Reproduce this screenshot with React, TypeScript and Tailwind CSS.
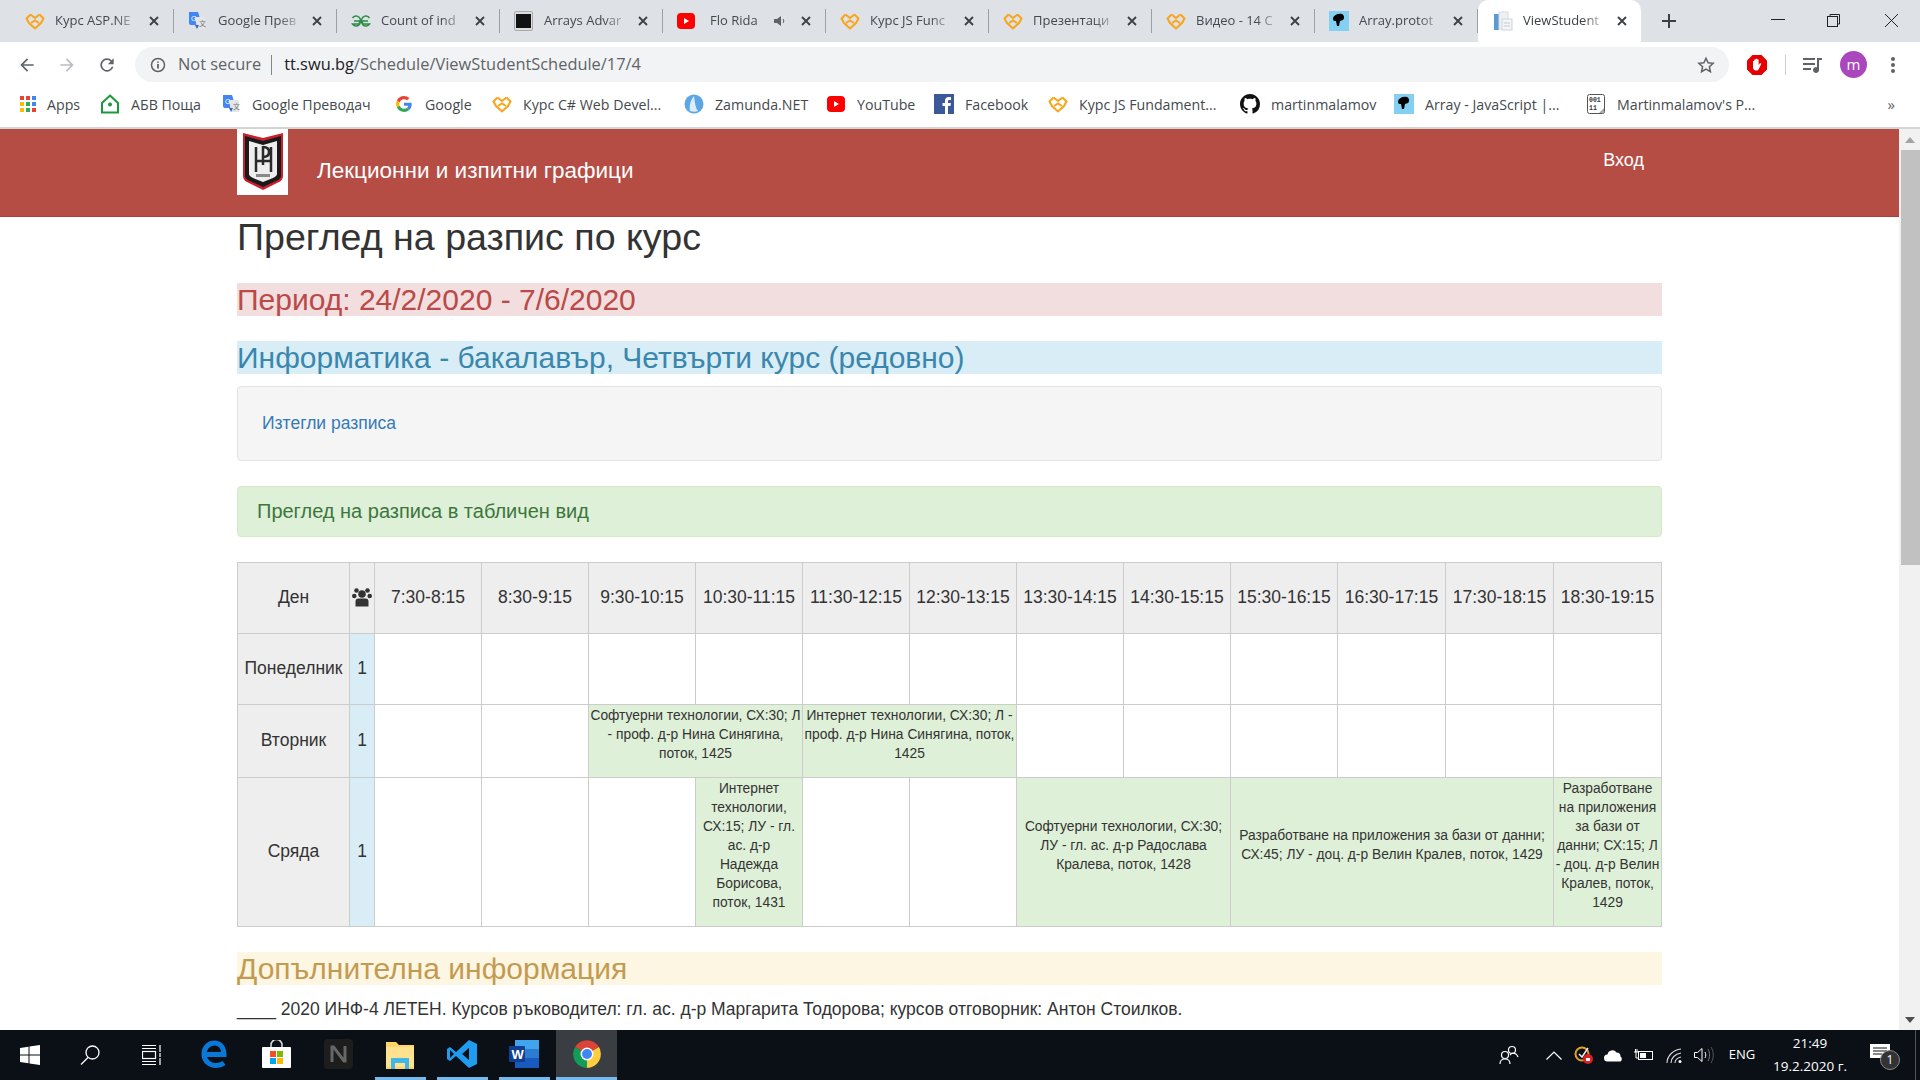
import React from 'react';

const SoftUni = () => (
  <svg width="20" height="17" viewBox="0 0 20 17" fill="none" stroke="#f9a51a" strokeWidth="2" className="shrink-0">
    <path d="M5.500 1.500 L1.500 5.500 L4 10 L10 15.500 L16 10 L18.500 5.500 L14.500 1.500" />
    <path d="M5.500 1.500 L10 5 L14.500 1.500" />
    <path d="M6 10 L10 7.500 L14 10" />
  </svg>
);
const GTranslate = () => (
  <svg width="18" height="20" viewBox="0 0 18 20" className="shrink-0">
    <path d="M1 1h9l4 13H3a2 2 0 0 1-2-2z" fill="#4285f4" />
    <path d="M7 6h10v11a1 1 0 0 1-1 1H9z" fill="#e3e5e8" />
    <path d="M7 14h4l-2 4z" fill="#3367c8" />
    <text x="3" y="10" fontSize="7" fill="#fff" fontFamily="Liberation Sans">G</text>
    <text x="11" y="15" fontSize="7" fill="#777" fontFamily="Noto Sans CJK SC">文</text>
  </svg>
);
const Gfg = () => (
  <svg width="20" height="14" viewBox="0 0 20 14" fill="none" stroke="#2f8d46" strokeWidth="1.500" className="shrink-0">
    <path d="M1.500 4a4.500 5 0 1 1 0 6h7V7H3" />
    <path d="M18.500 4a4.500 5 0 1 0 0 6h-7V7H17" />
  </svg>
);
const Terminal = () => (
  <svg width="19" height="20" viewBox="0 0 19 20" className="shrink-0">
    <rect x="0.500" y="0.500" width="18" height="19" rx="1.500" fill="#ddd" stroke="#aaa" />
    <rect x="2" y="3" width="15" height="14" fill="#111" />
  </svg>
);
const Yt = () => (
  <svg width="18" height="18" viewBox="0 0 18 18" className="shrink-0">
    <rect y="1" width="18" height="16" rx="4" fill="#f00" />
    <path d="M7 6l5 3-5 3z" fill="#fff" />
  </svg>
);
const Mdn = () => (
  <svg width="20" height="20" viewBox="0 0 20 20" className="shrink-0">
    <rect width="20" height="20" fill="#83d0f2" />
    <path d="M4 7c1-3 5-5 9-4 2 1 3 4 1 6l-3 1-1 5-2 0-1-5c-2 0-3 0-3-3z" fill="#000" />
  </svg>
);
const DocIcon = () => (
  <svg width="20" height="20" viewBox="0 0 20 20" className="shrink-0">
    <rect x="1" y="3" width="5" height="16" fill="#5b9bd5" />
    <rect x="6" y="1" width="9" height="17" fill="#eef1f4" stroke="#d5dae0" />
    <rect x="9" y="8" width="10" height="11" fill="#f2f4f6" stroke="#cfd5db" />
    <path d="M11 12h6M11 15h6" stroke="#c4ccd4" />
  </svg>
);
const Apps = () => (
  <svg width="16" height="16" viewBox="0 0 16 16" className="shrink-0">
    {['#ea4335', '#ea4335', '#4285f4', '#fbbc05', '#34a853', '#4285f4', '#fbbc05', '#34a853', '#ea4335'].map((c, i) => (
      <rect key={i} x={(i % 3) * 6} y={Math.floor(i / 3) * 6} width="4" height="4" fill={c} />
    ))}
  </svg>
);
const Abv = () => (
  <svg width="20" height="20" viewBox="0 0 20 20" fill="none" className="shrink-0">
    <path d="M10 1.500 L18 9 V18.500 H2 V9 Z" stroke="#1a9a3a" strokeWidth="2" fill="#fff" />
    <circle cx="10" cy="10.500" r="2" fill="#1a9a3a" />
  </svg>
);
const GoogleG = () => (
  <svg width="16" height="16" viewBox="0 0 48 48" className="shrink-0">
    <path fill="#EA4335" d="M24 9.500c3.500 0 6.700 1.200 9.200 3.600l6.900-6.900C35.900 2.400 30.500 0 24 0 14.600 0 6.500 5.400 2.600 13.200l8 6.200C12.500 13.700 17.800 9.500 24 9.500z" />
    <path fill="#4285F4" d="M47 24.500c0-1.600-.1-3.100-.4-4.500H24v9h12.900c-.6 3-2.200 5.500-4.700 7.200l7.700 6C44.400 38.100 47 31.900 47 24.500z" />
    <path fill="#FBBC05" d="M10.600 28.600a14.500 14.500 0 0 1 0-9.200l-8-6.200a24 24 0 0 0 0 21.600z" />
    <path fill="#34A853" d="M24 48c6.500 0 11.900-2.100 15.900-5.800l-7.700-6c-2.200 1.400-4.900 2.300-8.200 2.300-6.200 0-11.500-4.200-13.400-9.900l-8 6.200C6.500 42.600 14.600 48 24 48z" />
  </svg>
);
const Globe = () => (
  <svg width="20" height="20" viewBox="0 0 20 20" className="shrink-0">
    <circle cx="10" cy="10" r="9.500" fill="#5aa6e6" />
    <path d="M10 2c-3 4-5 8-4 15 3 1 6 1 8 0-3-4-3-9-4-15z" fill="#dcecfa" />
  </svg>
);
const Fb = () => (
  <svg width="20" height="20" viewBox="0 0 20 20" className="shrink-0">
    <rect width="20" height="20" fill="#3b5998" />
    <path d="M14 20v-8h2.500l.4-3H14V7.500c0-1 .3-1.500 1.500-1.500H17V3.200C16.500 3.100 15.600 3 14.700 3 12.500 3 11 4.300 11 6.800V9H8.500v3H11v8z" fill="#fff" />
  </svg>
);
const Github = () => (
  <svg width="20" height="20" viewBox="0 0 16 16" fill="#111" className="shrink-0">
    <path d="M8 0C3.580 0 0 3.580 0 8c0 3.540 2.290 6.530 5.470 7.590.4.070.55-.17.55-.38 0-.19-.01-.82-.01-1.490-2.010.37-2.530-.49-2.690-.94-.09-.23-.48-.94-.82-1.130-.28-.15-.68-.52-.01-.53.63-.01 1.080.58 1.230.82.720 1.210 1.870.87 2.330.66.070-.52.280-.87.510-1.070-1.780-.2-3.640-.89-3.640-3.950 0-.87.310-1.590.820-2.150-.08-.2-.36-1.020.08-2.120 0 0 .67-.21 2.200.82.640-.18 1.320-.27 2-.27s1.360.09 2 .27c1.530-1.040 2.200-.82 2.200-.82.440 1.100.160 1.920.080 2.120.51.560.82 1.270.82 2.150 0 3.070-1.870 3.750-3.650 3.950.29.250.54.730.54 1.480 0 1.070-.01 1.930-.01 2.200 0 .21.150.46.550.38A8.010 8.010 0 0 0 16 8c0-4.420-3.580-8-8-8z" />
  </svg>
);
const Binary = () => (
  <svg width="18" height="20" viewBox="0 0 18 20" className="shrink-0">
    <rect x="0.500" y="0.500" width="17" height="19" rx="2" fill="#fff" stroke="#555" />
    <text x="2" y="8" fontSize="6.500" fontFamily="Liberation Mono" fontWeight="700" fill="#333">001</text>
    <text x="2" y="16" fontSize="6.500" fontFamily="Liberation Mono" fontWeight="700" fill="#333">11</text>
    <path d="M12 19l5-5v5z" fill="#aaa" />
  </svg>
);

const tabs = [
  { icon: <SoftUni />, t: 'Курс ASP.NE' },
  { icon: <GTranslate />, t: 'Google Прев' },
  { icon: <Gfg />, t: 'Count of ind' },
  { icon: <Terminal />, t: 'Arrays Advar' },
  { icon: <Yt />, t: 'Flo Rida', audio: true },
  { icon: <SoftUni />, t: 'Курс JS Func' },
  { icon: <SoftUni />, t: 'Презентаци' },
  { icon: <SoftUni />, t: 'Видео - 14 С' },
  { icon: <Mdn />, t: 'Array.protot' },
];

const X = () => (
  <svg width="10" height="10" viewBox="0 0 10 10" stroke="#3c4043" strokeWidth="1.800" className="shrink-0">
    <path d="M1 1l8 8M9 1l-8 8" />
  </svg>
);

const bookmarks = [
  { icon: <Apps />, t: 'Apps', w: 'w-[80px]' },
  { icon: <Abv />, t: 'АБВ Поща', w: 'w-[121px]' },
  { icon: <GTranslate />, t: 'Google Преводач', w: 'w-[173px]' },
  { icon: <GoogleG />, t: 'Google', w: 'w-[98px]' },
  { icon: <SoftUni />, t: 'Курс C# Web Devel...', w: 'w-[192px]' },
  { icon: <Globe />, t: 'Zamunda.NET', w: 'w-[142px]' },
  { icon: <Yt />, t: 'YouTube', w: 'w-[108px]' },
  { icon: <Fb />, t: 'Facebook', w: 'w-[114px]' },
  { icon: <SoftUni />, t: 'Курс JS Fundament...', w: 'w-[192px]' },
  { icon: <Github />, t: 'martinmalamov', w: 'w-[154px]' },
  { icon: <Mdn />, t: 'Array - JavaScript |...', w: 'w-[192px]' },
  { icon: <Binary />, t: "Martinmalamov's P...", w: 'w-[200px]' },
];

const times = ['7:30-8:15', '8:30-9:15', '9:30-10:15', '10:30-11:15', '11:30-12:15', '12:30-13:15', '13:30-14:15', '14:30-15:15', '15:30-16:15', '16:30-17:15', '17:30-18:15', '18:30-19:15'];
const colW = ['w-[107px]', 'w-[107px]', 'w-[107px]', 'w-[107px]', 'w-[107px]', 'w-[107px]', 'w-[107px]', 'w-[107px]', 'w-[107px]', 'w-[108px]', 'w-[108px]', 'w-[108px]'];

const bd = 'border border-[#cccccc]';
const Day = ({ d }: { d: string }) => (
  <>
    <td className={`${bd} bg-[#eeeeee] text-center text-[17.500px] text-[#333] pb-[2px]`}>{d}</td>
    <td className={`${bd} bg-[#d9edf7] text-center text-[17.500px] text-[#333] pb-[2px]`}>1</td>
  </>
);
const Empty = () => <td className={bd} />;
const Lesson = ({ span, children }: { span?: number; children: React.ReactNode }) => (
  <td colSpan={span} className={`${bd} bg-[#dff0d8] text-center align-middle text-[13.800px] leading-[19px] text-[#333] px-px pb-[14px]`}>
    {children}
  </td>
);

const Logo = () => (
  <div className="w-[51px] h-[66px] bg-white flex items-center justify-center shrink-0">
    <svg width="44" height="60" viewBox="0 0 44 60">
      <path d="M2 1 L22 6 L42 1 V44 Q42 49 36 51 L22 58 L8 51 Q2 49 2 44 Z" fill="#c8202c" />
      <path d="M4 4 L22 9 L40 4 V44 Q40 47 35 49 L22 55 L9 49 Q4 47 4 44 Z" fill="#1a1a1a" />
      <path d="M8 9 L22 13 L36 9 V42 Q36 44 32 46 L22 50 L12 46 Q8 44 8 42 Z" fill="#eeeeee" />
      <path d="M15 15V40M30 15V40M15 29H30M22 14V33M22 15Q28 15 28 20Q28 25 22 25" stroke="#2a2a2a" strokeWidth="2.500" fill="none" />
      <rect x="15" y="42" width="14" height="3" fill="#888" />
    </svg>
  </div>
);

export default function App() {
  return (
    <div className="w-[1920px] h-[1080px] overflow-hidden flex flex-col bg-white font-['Liberation_Sans',sans-serif]">
      {/* tab strip */}
      <div className="h-[42px] bg-[#dee1e6] flex shrink-0 pl-[11px] font-['Open_Sans',sans-serif] text-[13px] text-[#45494e]">
        {tabs.map((tab, i) => (
          <div key={i} className="w-[163px] flex items-center border-r border-[#9aa0a6] my-[9px] pl-[14px] pr-[14px] shrink-0">
            <div className={tab.audio ? 'w-[33px] shrink-0 flex' : 'w-[30px] shrink-0 flex'}>{tab.icon}</div>
            <span className="flex-1 min-w-0 whitespace-nowrap [mask-image:linear-gradient(to_right,black_70%,transparent)]">{tab.t}</span>
            {tab.audio && (
              <svg width="13" height="12" viewBox="0 0 13 12" className="shrink-0 mr-[14px]" fill="#5f6368">
                <path d="M0 4h3l4-3v10L3 8H0z" />
                <path d="M9 4c1 1 1 3 0 4" stroke="#5f6368" fill="none" />
              </svg>
            )}
            {!tab.audio && <span className="w-[8px] shrink-0" />}
            <X />
          </div>
        ))}
        <div className="w-[163px] h-[42px] bg-white rounded-t-[10px] flex items-center pl-[15px] pr-[14px] shrink-0 text-[#3c4043]">
          <div className="w-[30px] shrink-0 flex"><DocIcon /></div>
          <span className="flex-1 min-w-0 whitespace-nowrap [mask-image:linear-gradient(to_right,black_70%,transparent)]">ViewStudent</span>
          <span className="w-[8px] shrink-0" />
          <X />
        </div>
        <div className="w-[56px] flex items-center justify-center shrink-0">
          <svg width="16" height="16" viewBox="0 0 16 16" stroke="#3c4043" strokeWidth="2"><path d="M8 1v14M1 8h14" /></svg>
        </div>
        <div className="flex-1" />
        <div className="flex shrink-0 -mt-[2px]">
          <div className="w-[54px] flex items-center justify-center">
            <svg width="14" height="2" className="block"><rect width="14" height="1" fill="#222" /></svg>
          </div>
          <div className="w-[57px] flex items-center justify-center">
            <svg width="13" height="13" viewBox="0 0 13 13" fill="none" stroke="#222"><rect x="0.500" y="2.500" width="10" height="10" /><path d="M3 2.500V0.500H12.500V10H10.500" /></svg>
          </div>
          <div className="w-[58px] flex items-center justify-center">
            <svg width="13" height="13" viewBox="0 0 13 13" stroke="#222"><path d="M0 0l13 13M13 0L0 13" /></svg>
          </div>
        </div>
      </div>

      {/* toolbar */}
      <div className="h-[40px] bg-white flex shrink-0 pt-[5px]">
        <div className="w-[135px] h-[35px] flex items-center pl-[17px] gap-[20px] shrink-0">
          <svg width="20" height="20" viewBox="0 0 24 24" fill="#5f6368"><path d="M20 11H7.800l5.600-5.600L12 4l-8 8 8 8 1.400-1.400L7.800 13H20z" /></svg>
          <svg width="20" height="20" viewBox="0 0 24 24" fill="#b9bcc1"><path d="M4 11h12.200l-5.600-5.600L12 4l8 8-8 8-1.400-1.400 5.600-5.600H4z" /></svg>
          <svg width="20" height="20" viewBox="0 0 24 24" fill="#5f6368"><path d="M17.650 6.350A8 8 0 1 0 19.730 14h-2.080a6 6 0 1 1-1.410-6.240L13 11h7V4z" /></svg>
        </div>
        <div className="w-[1594px] h-[35px] bg-[#f1f3f4] rounded-full flex items-center pl-[15px] shrink-0 font-['Open_Sans',sans-serif] text-[16.400px]">
          <svg width="16" height="16" viewBox="0 0 16 16" fill="none" className="shrink-0"><circle cx="8" cy="8" r="6.500" stroke="#5f6368" strokeWidth="1.500" /><path d="M8 7v4.500M8 4.500v1.300" stroke="#5f6368" strokeWidth="1.800" /></svg>
          <span className="ml-[12px] text-[#5f6368]">Not secure</span>
          <span className="w-px h-[20px] bg-[#80868b] ml-[10px] mr-[12px]" />
          <span className="text-[#202124]">tt.swu.bg</span>
          <span className="text-[#5f6368]">/Schedule/ViewStudentSchedule/17/4</span>
          <svg width="18" height="18" viewBox="0 0 24 24" fill="none" stroke="#5f6368" strokeWidth="2" className="ml-auto mr-[14px]"><path d="M12 3l2.800 6.100 6.700.7-5 4.500 1.400 6.600L12 17.500 6.100 20.900l1.400-6.600-5-4.500 6.700-.7z" /></svg>
        </div>
        <div className="flex-1 h-[35px] flex items-center pl-[17px]">
          <svg width="22" height="22" viewBox="0 0 22 22" className="shrink-0">
            <path d="M6.500 1h9L21 6.500v9L15.500 21h-9L1 15.500v-9z" fill="#e60000" />
            <path d="M7 11V7h1.300v3.500V5.500h1.400V10V4.700h1.500V10V5.500h1.400V11l1.500-2 1.200.8-2.600 5.400c-.4.800-1.200 1.300-2.200 1.300H10c-1.700 0-3-1.300-3-3z" fill="#fff" />
          </svg>
          <span className="w-px h-[20px] bg-[#c9ccd0] ml-[17px] mr-[17px]" />
          <svg width="20" height="18" viewBox="0 0 20 18" fill="#5f6368" className="shrink-0"><path d="M0 2h12v2H0zM0 7h12v2H0zM0 12h8v2H0z" /><path d="M14 2h5v2h-3v10a3 3 0 1 1-2-2.800z" /></svg>
          <div className="w-[27px] h-[27px] rounded-full bg-[#ab47bc] text-white flex items-center justify-center text-[15px] ml-[17px] shrink-0 font-['Open_Sans',sans-serif]">m</div>
          <svg width="4" height="18" viewBox="0 0 4 18" fill="#5f6368" className="ml-[24px] shrink-0"><circle cx="2" cy="3" r="2" /><circle cx="2" cy="9" r="2" /><circle cx="2" cy="15" r="2" /></svg>
        </div>
      </div>

      {/* bookmarks */}
      <div className="h-[47px] bg-white border-b-2 border-[#d2d3d5] flex items-center shrink-0 pl-[20px] font-['Open_Sans',sans-serif] text-[14.200px] text-[#45494e] whitespace-nowrap">
        {bookmarks.map((b, i) => (
          <div key={i} className={`${b.w} flex items-center shrink-0`}>
            <div className={i === 0 ? 'w-[27px] flex shrink-0' : 'w-[20px] mr-[11px] flex justify-center shrink-0'}>{b.icon}</div>
            <span>{b.t}</span>
          </div>
        ))}
        <span className="ml-auto mr-[25px] text-[15px] text-[#5f6368]">»</span>
      </div>

      {/* page */}
      <div className="flex-1 min-h-0 flex">
        <div className="flex-1 min-w-0 overflow-hidden">
          <header className="h-[88px] bg-[#b64d45] border-b border-[#a8433b]">
            <div className="w-[1425px] mx-auto flex items-start text-white">
              <Logo />
              <div className="ml-[29px] mt-[27px] text-[22.500px] leading-[30px]">Лекционни и изпитни графици</div>
              <div className="ml-auto mr-[18px] mt-[20px] text-[18px] leading-[22px]">Вход</div>
            </div>
          </header>
          <main className="w-[1425px] mx-auto text-[#333]">
            <h1 className="h-[40px] text-[37.600px] leading-[40px] text-[#333]">Преглед на разпис по курс</h1>
            <h2 className="mt-[26px] h-[33px] bg-[#f2dede] text-[#b94a48] text-[30px] leading-[33px]">Период: 24/2/2020 - 7/6/2020</h2>
            <h2 className="mt-[25px] h-[33px] bg-[#d9edf7] text-[#3a87ad] text-[30px] leading-[33px]">Информатика - бакалавър, Четвърти курс (редовно)</h2>
            <div className="mt-[12px] h-[75px] bg-[#f5f5f5] border border-[#e3e3e3] rounded-[4px] pl-[24px] flex items-center text-[#337ab7] text-[17.500px]">Изтегли разписа</div>
            <div className="mt-[25px] h-[51px] bg-[#dff0d8] border border-[#d6e9c6] rounded-[4px] pl-[19px] pb-[2px] flex items-center text-[#3c763d] text-[20px]">Преглед на разписа в табличен вид</div>
            <table className="mt-[25px] w-[1425px] table-fixed border-collapse">
              <colgroup>
                <col className="w-[112px]" />
                <col className="w-[25px]" />
                {colW.map((c, i) => <col key={i} className={c} />)}
              </colgroup>
              <thead>
                <tr className="h-[71px] bg-[#eeeeee] text-[17.500px] text-[#333]">
                  <th className={`${bd} font-normal pb-[2px]`}>Ден</th>
                  <th className={`${bd} font-normal pb-[2px]`}>
                    <svg width="20" height="19" viewBox="0 0 20 19" fill="#333" className="mx-auto block">
                      <circle cx="10" cy="6" r="3.800" /><circle cx="4.500" cy="2.500" r="2.300" /><circle cx="15.500" cy="2.500" r="2.300" />
                      <circle cx="2.300" cy="8" r="2.300" /><circle cx="17.700" cy="8" r="2.300" />
                      <path d="M3.500 18.500v-5a3 3 0 0 1 3-3h7a3 3 0 0 1 3 3v5z" />
                    </svg>
                  </th>
                  {times.map((t) => <th key={t} className={`${bd} font-normal whitespace-nowrap pb-[2px]`}>{t}</th>)}
                </tr>
              </thead>
              <tbody>
                <tr className="h-[71px]">
                  <Day d="Понеделник" />
                  {times.map((t) => <Empty key={t} />)}
                </tr>
                <tr className="h-[73px]">
                  <Day d="Вторник" />
                  <Empty /><Empty />
                  <Lesson span={2}>Софтуерни технологии, СХ:30; Л - проф. д-р Нина Синягина, поток, 1425</Lesson>
                  <Lesson span={2}>Интернет технологии, СХ:30; Л - проф. д-р Нина Синягина, поток, 1425</Lesson>
                  <Empty /><Empty /><Empty /><Empty /><Empty /><Empty />
                </tr>
                <tr className="h-[149px]">
                  <Day d="Сряда" />
                  <Empty /><Empty /><Empty />
                  <Lesson>Интернет технологии, СХ:15; ЛУ - гл. ас. д-р<br />Надежда Борисова, поток, 1431</Lesson>
                  <Empty /><Empty />
                  <Lesson span={2}>Софтуерни технологии, СХ:30; ЛУ - гл. ас. д-р Радослава Кралева, поток, 1428</Lesson>
                  <Lesson span={3}>Разработване на приложения за бази от данни; СХ:45; ЛУ - доц. д-р Велин Кралев, поток, 1429</Lesson>
                  <Lesson>Разработване на приложения за бази от данни; СХ:15; Л - доц. д-р Велин Кралев, поток, 1429</Lesson>
                </tr>
              </tbody>
            </table>
            <h2 className="mt-[25px] h-[33px] bg-[#fdf6e3] text-[#c49a50] text-[30px] leading-[33px]">Допълнителна информация</h2>
            <p className="mt-[14px] text-[17.500px] leading-[20px] text-[#333] whitespace-nowrap">____ 2020 ИНФ-4 ЛЕТЕН. Курсов ръководител: гл. ас. д-р Маргарита Тодорова; курсов отговорник: Антон Стоилков.</p>
          </main>
        </div>
        <div className="w-[21px] shrink-0 bg-[#f1f1f1] flex flex-col items-end">
          <div className="h-[21px] w-full flex items-center justify-center">
            <svg width="10" height="6" viewBox="0 0 10 6" fill="#a3a3a3"><path d="M5 0l5 6H0z" /></svg>
          </div>
          <div className="h-[415px] w-[19px] bg-[#c1c1c1]" />
          <div className="mt-auto h-[21px] w-full flex items-center justify-center">
            <svg width="10" height="6" viewBox="0 0 10 6" fill="#505050"><path d="M5 6l5-6H0z" /></svg>
          </div>
        </div>
      </div>

      {/* taskbar */}
      <div className="h-[50px] bg-[#0b1017] flex shrink-0 text-white font-['Open_Sans',sans-serif]">
        <div className="w-[60px] flex items-center justify-center">
          <svg width="20" height="20" viewBox="0 0 20 20" fill="#fff"><path d="M0 3l8.500-1.200V9.500H0zM9.500 1.600L20 0v9.500H9.500zM0 10.500h8.500v7.700L0 17zM9.500 10.500H20V20L9.500 18.400z" /></svg>
        </div>
        <div className="w-[60px] flex items-center justify-center">
          <svg width="20" height="20" viewBox="0 0 20 20" fill="none" stroke="#fff" strokeWidth="1.300"><circle cx="12.500" cy="7.500" r="6.500" /><path d="M8 12.500L1 19.500" /></svg>
        </div>
        <div className="w-[63px] flex items-center justify-center">
          <svg width="20" height="20" viewBox="0 0 20 20" fill="none" stroke="#fff" strokeWidth="1.200"><path d="M0 .5h14M0 19.500h14M0 3.500h14M0 16.500h14" /><rect x=".5" y="6.500" width="13" height="7" /><path d="M18 0v7M18 8v4M18 13v7" /></svg>
        </div>
        {[
          <svg key="e" width="26" height="28" viewBox="0 0 26 28" fill="none"><path d="M4 14.500H23C23 7 18.500 3 13.500 3 7 3 2.500 8.500 3 15 3.500 21.500 9 25.500 14.500 25.500 18 25.500 21 24.500 23 23" stroke="#0a78d6" strokeWidth="5" /></svg>,
          <svg key="s" width="29" height="28" viewBox="0 0 29 28"><path d="M9 8V5a5 5 0 0 1 11 0v3" fill="none" stroke="#ddd" strokeWidth="1.500" /><rect y="7" width="29" height="21" rx="1" fill="#fff" /><rect x="8" y="11" width="6" height="6" fill="#f25022" /><rect x="15" y="11" width="6" height="6" fill="#7fba00" /><rect x="8" y="18" width="6" height="6" fill="#00a4ef" /><rect x="15" y="18" width="6" height="6" fill="#ffb900" /></svg>,
          <svg key="n" width="29" height="30" viewBox="0 0 29 30"><rect width="29" height="30" rx="4" fill="#1d1d1d" /><path d="M8 23V8h1.500L20 22h1V7" fill="none" stroke="#666" strokeWidth="3" /></svg>,
          <svg key="f" width="28" height="30" viewBox="0 0 28 30"><path d="M0 3h10l3 3h15v24H0z" fill="#ffd766" /><rect y="8" width="28" height="20" fill="#fee28f" /><path d="M5 19h18v11h-4v-6H9v6H5z" fill="#3fb7e8" /></svg>,
          <svg key="v" width="30" height="30" viewBox="0 0 30 30"><path d="M22 1l8 4v20l-8 4L9 17l-6 5-3-2v-10l3-2 6 5z" fill="#1f9cf0" /><path d="M22 9l-7 6 7 6z" fill="#0b1017" /><path d="M3 11l4 4-4 4z" fill="#0b1017" /></svg>,
          <svg key="w" width="30" height="28" viewBox="0 0 30 28"><rect x="6" width="24" height="28" rx="2" fill="#2b7cd3" /><rect x="6" width="24" height="9" fill="#41a5ee" /><rect x="6" y="18" width="24" height="10" fill="#185abd" /><rect y="6" width="16" height="16" rx="1" fill="#103f91" /><text x="2.500" y="18.500" fontSize="13" fontWeight="700" fill="#fff" fontFamily="Liberation Sans">W</text></svg>,
        ].map((ic, i) => (
          <div key={i} className="w-[62px] flex flex-col items-center shrink-0">
            <div className="flex-1 flex items-center justify-center">{ic}</div>
            <div className={i >= 3 ? 'h-[3px] w-[51px] bg-[#76b9ed]' : 'h-[3px]'} />
          </div>
        ))}
        <div className="w-[61px] bg-[#3a3d42] flex flex-col items-center shrink-0 ml-[1px]">
          <div className="flex-1 flex items-center justify-center">
            <svg width="28" height="28" viewBox="0 0 28 28">
              <path d="M14 14L2 7a14 14 0 0 1 24 0z" fill="#db4437" />
              <path d="M14 14L26 7a14 14 0 0 1-12 21z" fill="#ffcd40" />
              <path d="M14 14v14A14 14 0 0 1 2 7z" fill="#0f9d58" />
              <circle cx="14" cy="14" r="6.500" fill="#fff" /><circle cx="14" cy="14" r="5" fill="#4285f4" />
            </svg>
          </div>
          <div className="h-[3px] w-full bg-[#76b9ed]" />
        </div>
        <div className="flex-1" />
        <div className="flex items-center shrink-0">
          <div className="w-[40px] flex justify-center">
            <svg width="20" height="20" viewBox="0 0 20 20" fill="none" stroke="#fff" strokeWidth="1.200"><circle cx="13" cy="5" r="3.500" /><circle cx="6" cy="10" r="3.500" /><path d="M1 19c0-3 2-5 5-5s5 2 5 5M11 10c1-1 2-2 2-2 3 0 5 1 6 4" /></svg>
          </div>
          <div className="w-[10px]" />
          <div className="w-[30px] flex justify-center">
            <svg width="16" height="9" viewBox="0 0 16 9" fill="none" stroke="#fff" strokeWidth="1.200"><path d="M0.500 8.500L8 1l7.500 7.500" /></svg>
          </div>
          <div className="w-[30px] flex justify-center">
            <svg width="20" height="20" viewBox="0 0 20 20"><circle cx="8" cy="9" r="6.500" fill="none" stroke="#e5a320" strokeWidth="2" /><path d="M5 9l3 3 6-9" fill="none" stroke="#eee" strokeWidth="1.500" /><circle cx="14" cy="14" r="5" fill="#e02020" /><rect x="12" y="13" width="4" height="3" fill="#fff" /></svg>
          </div>
          <div className="w-[30px] flex justify-center">
            <svg width="20" height="13" viewBox="0 0 20 13"><path d="M3.500 12.500a3.500 3.500 0 0 1 0-7 5 5 0 0 1 9-2 4 4 0 0 1 4 4 3 3 0 0 1 0 5z" fill="#fff" /></svg>
          </div>
          <div className="w-[30px] flex justify-center">
            <svg width="20" height="12" viewBox="0 0 20 12" fill="none" stroke="#fff"><rect x="4.500" y="2.500" width="14" height="8" /><rect x="6" y="4" width="6" height="5" fill="#fff" stroke="none" /><path d="M0 3h4M1.500 0v3M3 0v3M2 3v6h2" /></svg>
          </div>
          <div className="w-[30px] flex justify-center">
            <svg width="16" height="15" viewBox="0 0 16 15" fill="none" stroke="#ddd" strokeWidth="1.100"><path d="M1 15C1 8 7 2 15 1M5 15c0-5 4-9 10-10M9 15c0-3 2-5 6-6" /><circle cx="14" cy="13.500" r="1.500" fill="#fff" stroke="none" /></svg>
          </div>
          <div className="w-[30px] flex justify-center">
            <svg width="20" height="16" viewBox="0 0 20 16" fill="none" stroke="#fff" strokeWidth="1"><path d="M.5 5.500h3L8 1.500v13l-4.500-4h-3z" /><path d="M11 5c1 2 1 4 0 6" /><path d="M14 2c2 4 2 8 0 12" stroke="#777" /><path d="M17 0c3 5 3 11 0 16" stroke="#555" /></svg>
          </div>
          <div className="w-[46px] text-center text-[13px]">ENG</div>
          <div className="w-[90px] text-center text-[13.500px] leading-[23px]">
            <div>21:49</div>
            <div className="whitespace-nowrap">19.2.2020 г.</div>
          </div>
          <div className="w-[50px] flex justify-center relative">
            <svg width="20" height="17" viewBox="0 0 20 17" className="mb-[6px]"><path d="M0 0h20v14H0z" fill="#fff" /><path d="M3 4h14M3 7h14M3 10h9" stroke="#111" /></svg>
            <span className="absolute left-[25px] top-[6px] w-[20px] h-[20px] rounded-full bg-[#333] border border-[#888] text-[12px] leading-[18px] text-center">1</span>
          </div>
          <div className="w-[15px] h-[50px] flex justify-end"><span className="w-px h-full bg-[#555] mr-[4px]" /></div>
        </div>
      </div>
    </div>
  );
}
